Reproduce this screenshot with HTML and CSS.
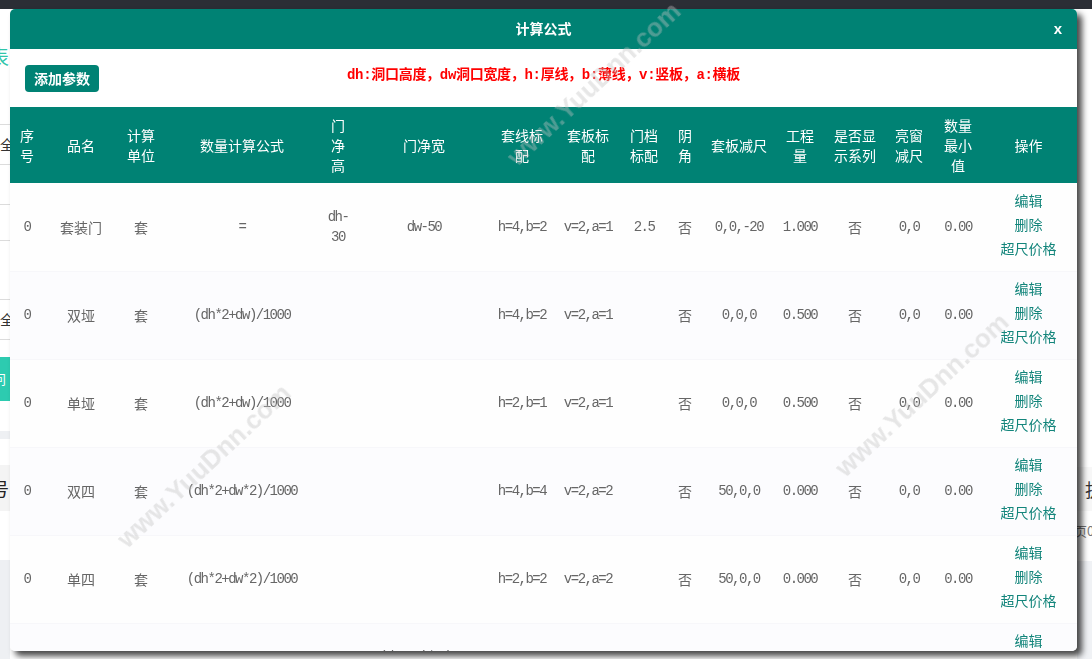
FILE: index.html
```html
<!DOCTYPE html>
<html lang="zh-CN">
<head>
<meta charset="utf-8">
<title>计算公式</title>
<link rel="stylesheet" href="styles.css">
</head>
<body>
<div class="topbar"></div>
<div class="page">
  <div class="side-l">
    <div class="l-title">表</div>
    <div class="l-row l-first">全</div>
    <div class="l-row l-empty"></div>
    <div class="l-row l-empty2"></div>
    <div class="l-row l-second">全</div>
    <div class="l-btn">问</div>
    <div class="l-band"></div>
    <div class="l-box">号</div>
    <div class="l-foot"></div>
  </div>
  <div class="side-r">
    <div class="r-band">拔</div>
    <div class="r-text">页0</div>
    <div class="r-foot"></div>
  </div>
</div>

<div class="modal">
  <div class="m-head">
    <div class="m-title">计算公式</div>
    <div class="m-close">x</div>
  </div>
  <div class="m-tools">
    <button class="btn-add">添加参数</button>
    <div class="hint">dh:洞口高度，dw洞口宽度，h:厚线，b:薄线，v:竖板，a:横板</div>
  </div>
  <div class="m-body">
    <table class="tbl">
      <colgroup>
        <col class="c1"><col class="c2"><col class="c3"><col class="c4"><col class="c5"><col class="c6"><col class="c7"><col class="c8"><col class="c9"><col class="c10"><col class="c11"><col class="c12"><col class="c13"><col class="c14"><col class="c15"><col class="c16">
      </colgroup>
      <thead>
        <tr>
          <th>序<br>号</th>
          <th>品名</th>
          <th>计算<br>单位</th>
          <th>数量计算公式</th>
          <th>门<br>净<br>高</th>
          <th>门净宽</th>
          <th>套线标<br>配</th>
          <th>套板标<br>配</th>
          <th>门档<br>标配</th>
          <th>阴<br>角</th>
          <th>套板减尺</th>
          <th>工程<br>量</th>
          <th>是否显<br>示系列</th>
          <th>亮窗<br>减尺</th>
          <th>数量<br>最小<br>值</th>
          <th>操作</th>
        </tr>
      </thead>
      <tbody>
        <tr>
          <td class="n">0</td><td>套装门</td><td>套</td><td class="n">=</td><td class="n">dh-<br>30</td><td class="n">dw-50</td><td class="n">h=4,b=2</td><td class="n">v=2,a=1</td><td class="n">2.5</td><td>否</td><td class="n">0,0,-20</td><td class="n">1.000</td><td>否</td><td class="n">0,0</td><td class="n">0.00</td>
          <td class="ops"><div>编辑</div><div>删除</div><div>超尺价格</div></td>
        </tr>
        <tr>
          <td class="n">0</td><td>双垭</td><td>套</td><td class="n">(dh*2+dw)/1000</td><td></td><td></td><td class="n">h=4,b=2</td><td class="n">v=2,a=1</td><td></td><td>否</td><td class="n">0,0,0</td><td class="n">0.500</td><td>否</td><td class="n">0,0</td><td class="n">0.00</td>
          <td class="ops"><div>编辑</div><div>删除</div><div>超尺价格</div></td>
        </tr>
        <tr>
          <td class="n">0</td><td>单垭</td><td>套</td><td class="n">(dh*2+dw)/1000</td><td></td><td></td><td class="n">h=2,b=1</td><td class="n">v=2,a=1</td><td></td><td>否</td><td class="n">0,0,0</td><td class="n">0.500</td><td>否</td><td class="n">0,0</td><td class="n">0.00</td>
          <td class="ops"><div>编辑</div><div>删除</div><div>超尺价格</div></td>
        </tr>
        <tr>
          <td class="n">0</td><td>双四</td><td>套</td><td class="n">(dh*2+dw*2)/1000</td><td></td><td></td><td class="n">h=4,b=4</td><td class="n">v=2,a=2</td><td></td><td>否</td><td class="n">50,0,0</td><td class="n">0.000</td><td>否</td><td class="n">0,0</td><td class="n">0.00</td>
          <td class="ops"><div>编辑</div><div>删除</div><div>超尺价格</div></td>
        </tr>
        <tr>
          <td class="n">0</td><td>单四</td><td>套</td><td class="n">(dh*2+dw*2)/1000</td><td></td><td></td><td class="n">h=2,b=2</td><td class="n">v=2,a=2</td><td></td><td>否</td><td class="n">50,0,0</td><td class="n">0.000</td><td>否</td><td class="n">0,0</td><td class="n">0.00</td>
          <td class="ops"><div>编辑</div><div>删除</div><div>超尺价格</div></td>
        </tr>
        <tr>
          <td class="n">0</td><td>子母门<br>套装门</td><td>套</td><td class="n">=</td><td></td><td class="n">(dw-50)*2/3-5<br>0</td><td class="n">h=4,b=2</td><td class="n">v=2,a=1</td><td></td><td>否</td><td class="n">0,0,0</td><td class="n">1.000</td><td>否</td><td class="n">0,0</td><td class="n">0.00</td>
          <td class="ops"><div>编辑</div><div>删除</div><div>超尺价格</div></td>
        </tr>
      </tbody>
    </table>
  </div>
</div>

<div class="wm wm1">www.YuuDnn.com</div>
<div class="wm wm2">www.YuuDnn.com</div>
<div class="wm wm3">www.YuuDnn.com</div>
</body>
</html>
```
FILE: styles.css
```css
* { box-sizing: border-box; }
html, body { margin: 0; padding: 0; }
body {
  width: 1092px;
  height: 659px;
  overflow: hidden;
  background: #fff;
  font-family: "Noto Sans CJK SC", "Liberation Sans", sans-serif;
  display: flex;
  flex-direction: column;
}
.topbar { height: 9px; flex: none; background: #2b2e35; }
.page { flex: 1; display: flex; justify-content: space-between; }

/* background page: left sliver */
.side-l { width: 10px; overflow: hidden; display: flex; flex-direction: column; }
.l-title {
  margin: 36px 0 0 -11px; width: 30px; height: 24px;
  font-size: 20px; line-height: 24px; color: #2ec5aa; white-space: nowrap;
}
.l-row { border-bottom: 1px solid #dcdcdc; font-size: 14px; color: #333; white-space: nowrap; }
.l-first { margin-top: 55px; border-top: 1px solid #dcdcdc; height: 41px; line-height: 39px; }
.l-empty { height: 40px; }
.l-empty2 { height: 36px; }
.l-second { margin-top: 58px; border-top: 1px solid #dcdcdc; height: 41px; line-height: 39px; }
.l-btn {
  margin-top: 17px; height: 44px; background: #2dcbb0; color: #fff;
  font-size: 13px; line-height: 44px; text-indent: -7px; white-space: nowrap;
}
.l-band { margin-top: 30px; height: 8px; background: #eef0f3; }
.l-box {
  margin-top: 26px; height: 46px; background: #f4f4f4; color: #222;
  font-size: 18px; line-height: 46px; text-indent: -9px; white-space: nowrap;
}
.l-foot { margin-top: 49px; flex: 1; background: #eef0f3; }

/* background page: right sliver */
.side-r { width: 15px; overflow: hidden; display: flex; flex-direction: column; }
.r-band {
  margin-top: 458px; height: 44px; background: #f7f7f7; color: #333;
  font-size: 18px; line-height: 44px; padding-left: 8px; white-space: nowrap;
}
.r-text { margin-top: 10px; height: 20px; font-size: 13px; line-height: 20px; color: #777; text-indent: -3px; white-space: nowrap; }
.r-foot { margin-top: 20px; flex: 1; background: #f0f2f5; }

/* modal */
.modal {
  position: fixed;
  left: 10px; top: 9px;
  width: 1067px; height: 642px;
  background: #fff;
  border-radius: 5px;
  box-shadow: 5px 5px 6px rgba(0, 0, 0, 0.72);
  overflow: hidden;
  display: flex;
  flex-direction: column;
  z-index: 5;
}
.m-head {
  height: 40px; flex: none;
  background: #008274; color: #fff;
  display: grid; grid-template-columns: 1fr auto 1fr; align-items: center;
  font-size: 14px; font-weight: bold;
  padding-bottom: 2px;
}
.m-title { grid-column: 2; }
.m-close { grid-column: 3; justify-self: end; margin-right: 15px; font-family: "Liberation Sans", sans-serif; font-size: 15px; }

.m-tools {
  height: 58px; flex: none;
  display: grid; grid-template-columns: 1fr auto 1fr; align-items: center;
  padding: 0 15px;
}
.btn-add {
  grid-column: 1; justify-self: start;
  height: 27px; padding: 0 9px; margin-top: 0;
  border: 0; border-radius: 4px;
  background: #008274; color: #fff;
  font-family: "Noto Sans CJK SC", sans-serif; font-size: 14px; font-weight: bold; line-height: 27px;
}
.hint {
  grid-column: 2; margin-bottom: 10px;
  color: #ff0000; font-weight: bold; font-size: 14px; letter-spacing: -0.3px;
  font-family: "Liberation Mono", "Noto Sans CJK SC", monospace;
}

.m-body { flex: 1; overflow: hidden; }

.tbl { width: 1067px; border-collapse: collapse; table-layout: fixed; }
.c1 { width: 34px; } .c2 { width: 74px; } .c3 { width: 46px; } .c4 { width: 156px; }
.c5 { width: 36px; } .c6 { width: 136px; } .c7 { width: 60px; } .c8 { width: 72px; }
.c9 { width: 40px; } .c10 { width: 42px; } .c11 { width: 66px; } .c12 { width: 56px; }
.c13 { width: 54px; } .c14 { width: 54px; } .c15 { width: 44px; } .c16 { width: 97px; }

.tbl th {
  background: #008274; color: #fff;
  font-weight: normal; font-size: 14px; line-height: 20px;
  padding: 8px 0; height: 76px;
  text-align: center; vertical-align: middle; white-space: nowrap;
}
.tbl td {
  padding: 8px 0; text-align: center; vertical-align: middle;
  color: #666; font-size: 14px; line-height: 20px; white-space: nowrap;
}
.tbl tbody tr { background: #fcfcfe; }
.tbl tbody tr:nth-child(odd) { background: #fefefe; }
.tbl tbody tr + tr td { box-shadow: inset 0 1px 0 #f7f7fa; }
.tbl td.n {
  font-family: "Liberation Mono", monospace;
  font-size: 14px; letter-spacing: -1.5px;
}
.tbl td.ops { line-height: 24px; color: #13857b; padding: 5px 0 11px; }

/* watermark overlays */
.wm {
  position: absolute;
  z-index: 10;
  font-family: "Liberation Sans", sans-serif;
  font-weight: bold;
  font-size: 26px;
  color: rgba(195, 195, 195, 0.4);
  white-space: nowrap;
  pointer-events: none;
  transform: translate(-50%, -50%) rotate(-43deg);
}
.wm1 { left: 594px; top: 84px; }
.wm2 { left: 922px; top: 395px; }
.wm3 { left: 204px; top: 466px; }
```
